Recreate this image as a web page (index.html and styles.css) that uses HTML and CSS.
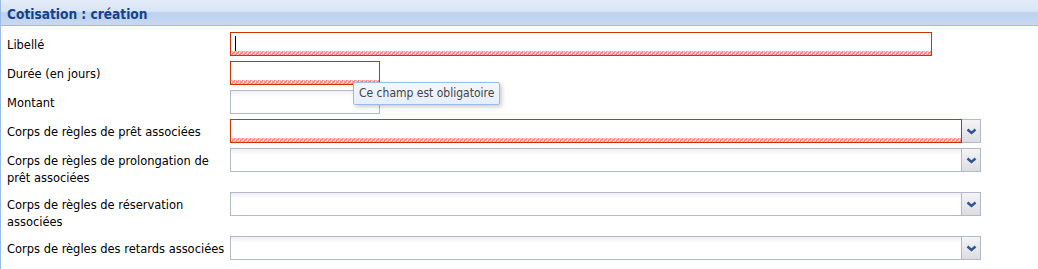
FILE: index.html
```html
<!DOCTYPE html>
<html lang="fr">
    <head>
        <meta charset="UTF-8">
        <title>Cotisation : création</title>
        <link rel="stylesheet" href="styles.css">
    </head>
    <body>
        <div class="panel">
            <div class="panel-header">Cotisation : création</div>
            <div class="panel-body">
                <!-- Champs simples -->
                <div class="form-row">
                    <label class="form-label">Libellé</label>
                    <div class="field field-wide invalid focused"><span class="caret"></span></div>
                </div>
                <div class="form-row">
                    <label class="form-label">Durée (en jours)</label>
                    <div class="field field-small invalid"></div>
                    <div class="tooltip">Ce champ est obligatoire</div>
                </div>
                <div class="form-row">
                    <label class="form-label">Montant</label>
                    <div class="field field-small"></div>
                </div>

                <!-- Listes déroulantes -->
                <div class="form-row">
                    <label class="form-label">Corps de règles de prêt associées</label>
                    <div class="combo">
                        <div class="field invalid"></div>
                        <div class="trigger"><svg width="11" height="7" viewBox="0 0 11 7"><polyline points="1.5,1.5 5.5,5 9.5,1.5" fill="none" stroke="#2f5595" stroke-width="2.4"/></svg></div>
                    </div>
                </div>
                <div class="form-row">
                    <label class="form-label">Corps de règles de prolongation de prêt associées</label>
                    <div class="combo">
                        <div class="field"></div>
                        <div class="trigger"><svg width="11" height="7" viewBox="0 0 11 7"><polyline points="1.5,1.5 5.5,5 9.5,1.5" fill="none" stroke="#2f5595" stroke-width="2.4"/></svg></div>
                    </div>
                </div>
                <div class="form-row">
                    <label class="form-label">Corps de règles de réservation associées</label>
                    <div class="combo">
                        <div class="field"></div>
                        <div class="trigger"><svg width="11" height="7" viewBox="0 0 11 7"><polyline points="1.5,1.5 5.5,5 9.5,1.5" fill="none" stroke="#2f5595" stroke-width="2.4"/></svg></div>
                    </div>
                </div>
                <div class="form-row">
                    <label class="form-label">Corps de règles des retards associées</label>
                    <div class="combo">
                        <div class="field"></div>
                        <div class="trigger"><svg width="11" height="7" viewBox="0 0 11 7"><polyline points="1.5,1.5 5.5,5 9.5,1.5" fill="none" stroke="#2f5595" stroke-width="2.4"/></svg></div>
                    </div>
                </div>
            </div>
        </div>
    </body>
</html>
```

FILE: styles.css
```css
body {
    margin: 0;
    font-family: "DejaVu Sans Condensed", "DejaVu Sans", sans-serif;
    font-size: 12.75px;
    color: #000;
    background-color: #fff;
}
.panel {
    border-left: 1px solid #99bbe8;
    height: 269px;
    box-sizing: border-box;
}
.panel-header {
    height: 26px;
    box-sizing: border-box;
    padding: 6px 0 0 6px;
    font-size: 13.6px;
    font-weight: bold;
    color: #15428b;
    background: linear-gradient(#e4ecf8 0, #d9e5f5 11px, #bcd1ef 13px, #c9daf2 26px);
    border-bottom: 1px solid #99bbe8;
}
.panel-body {
    padding: 6px 0 0 6px;
}
.form-row {
    display: flex;
    align-items: flex-start;
    position: relative;
    margin-bottom: 5px;
}
.form-label {
    width: 218px;
    padding: 4px 5px 1px 0;
    line-height: 17px;
    flex-shrink: 0;
}
.field {
    height: 24px;
    box-sizing: border-box;
    border: 1px solid #b5b8c8;
    background: linear-gradient(#eef0f2, #fff 6px);
    position: relative;
}
.field-wide {
    width: 702px;
}
.field-small {
    width: 150px;
}
.invalid {
    border-color: #cc3300;
    background:
        linear-gradient(135deg, transparent 45%, #ff8585 45%, #ff8585 72%, transparent 72%) 0 100% / 4px 4px repeat-x,
        linear-gradient(45deg, transparent 45%, #ffb0b0 45%, #ffb0b0 72%, transparent 72%) 0 100% / 4px 4px repeat-x,
        #fff;
}
.caret {
    position: absolute;
    left: 4px;
    top: 3px;
    width: 1px;
    height: 15px;
    background-color: #000;
}
.combo {
    display: flex;
    width: 751px;
}
.combo .field {
    flex: 1;
}
.trigger {
    width: 19px;
    height: 24px;
    box-sizing: border-box;
    border-top: 1px solid #b5b8c8;
    border-bottom: 1px solid #b5b8c8;
    border-right: 1px solid #b5b8c8;
    background: linear-gradient(#f4f4f6, #dcdde2);
    display: flex;
    align-items: center;
    justify-content: center;
}
.tooltip {
    position: absolute;
    left: 346px;
    top: 21px;
    height: 23px;
    box-sizing: border-box;
    padding: 3px 5px 0 5px;
    color: #444;
    font-size: 12px;
    border: 1px solid #99bbe8;
    border-radius: 2px;
    background: linear-gradient(#f3f7fd, #e6eefa);
    box-shadow: 2px 2px 4px rgba(0, 0, 0, 0.2);
    z-index: 10;
}
```
